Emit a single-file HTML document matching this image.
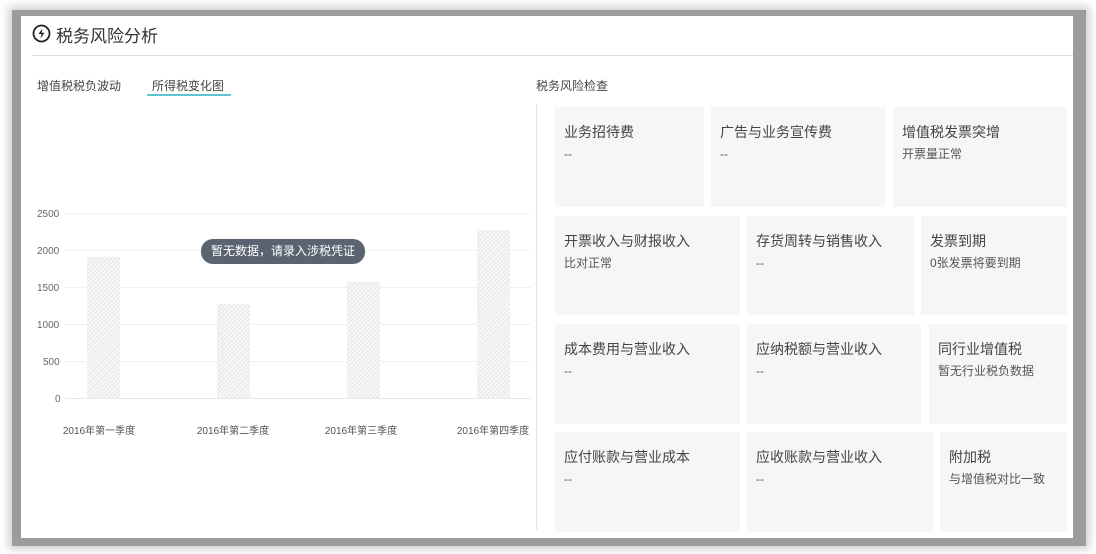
<!DOCTYPE html>
<html><head><meta charset="utf-8"><style>
*{margin:0;padding:0;box-sizing:border-box}
body{width:1096px;height:554px;background:#fff;position:relative;overflow:hidden;font-family:"Liberation Sans","Noto Sans CJK SC",sans-serif;color:#333}
.frame{position:absolute;left:12px;top:10px;width:1074px;height:536px;background:#9c9c9c;box-shadow:0 0 8px 4px #d4d4d4}
.panel{position:absolute;left:21px;top:16px;width:1052px;height:522px;background:#fff}
.a{position:absolute;white-space:nowrap}
.card{position:absolute;background:#f6f6f6;padding:16px 0 0 9px}
.card .t{font-size:14px;color:#444;line-height:18px}
.card .s{font-size:12px;color:#555;margin-top:6px;line-height:14px}
.yl{position:absolute;left:37px;font-size:10px;color:#666;width:24px}
.gl{position:absolute;left:65px;width:466px;height:1px;background:#f0f0f0}
.bar{position:absolute;width:33px;background:repeating-linear-gradient(135deg,#e4e4e4 0 1px,#f8f8f8 1px 3px)}
.xl{position:absolute;top:422px;font-size:10px;color:#555;width:100px;text-align:center}
</style></head><body>
<div class="frame"></div>
<div class="panel"></div>
<svg class="a" style="left:32px;top:24px" width="19" height="19" viewBox="0 0 19 19"><circle cx="9.5" cy="9.5" r="8" fill="none" stroke="#222" stroke-width="1.8"/><path d="M10.5 4.5 L6.5 10 H9.5 L8.5 14.5 L12.5 8.8 H9.6 Z" fill="#222"/></svg>
<div class="a" style="left:56px;top:22px;font-size:17px;color:#333">税务风险分析</div>
<div class="a" style="left:32px;top:55px;width:1041px;height:1px;background:#ddd"></div>
<div class="a" style="left:37px;top:77px;font-size:12px;color:#444">增值税税负波动</div>
<div class="a" style="left:152px;top:77px;font-size:12px;color:#444">所得税变化图</div>
<div class="a" style="left:147px;top:94px;width:84px;height:2px;background:#5ec3d4"></div>
<div class="a" style="left:536px;top:77px;font-size:12px;color:#444">税务风险检查</div>
<div class="a" style="left:536px;top:104px;width:1px;height:426px;background:#e2e2e2"></div>

<div class="yl" style="top:209px">2500</div><div class="gl" style="top:213px"></div>
<div class="yl" style="top:246px">2000</div><div class="gl" style="top:250px"></div>
<div class="yl" style="top:283px">1500</div><div class="gl" style="top:287px"></div>
<div class="yl" style="top:320px">1000</div><div class="gl" style="top:324px"></div>
<div class="yl" style="top:357px;left:43px">500</div><div class="gl" style="top:361px"></div>
<div class="yl" style="top:394px;left:55px">0</div><div class="gl" style="top:398px;background:#e8e8e8"></div>
<div class="bar" style="left:87px;top:257px;height:141px"></div>
<div class="bar" style="left:217px;top:304px;height:94px"></div>
<div class="bar" style="left:347px;top:282px;height:116px"></div>
<div class="bar" style="left:477px;top:230px;height:168px"></div>
<div class="xl" style="left:49px">2016年第一季度</div>
<div class="xl" style="left:183px">2016年第二季度</div>
<div class="xl" style="left:311px">2016年第三季度</div>
<div class="xl" style="left:443px">2016年第四季度</div>
<div class="a" style="left:201px;top:239px;width:164px;height:25px;border-radius:12px;background:#5a6471;color:#fff;font-size:12px;text-align:center;line-height:25px">暂无数据，请录入涉税凭证</div>

<div class="card" style="left:555px;top:107px;width:149px;height:100px"><div class="t">业务招待费</div><div class="s">--</div></div>
<div class="card" style="left:711px;top:107px;width:174px;height:100px"><div class="t">广告与业务宣传费</div><div class="s">--</div></div>
<div class="card" style="left:893px;top:107px;width:174px;height:100px"><div class="t">增值税发票突增</div><div class="s">开票量正常</div></div>
<div class="card" style="left:555px;top:216px;width:185px;height:99px"><div class="t">开票收入与财报收入</div><div class="s">比对正常</div></div>
<div class="card" style="left:747px;top:216px;width:167px;height:99px"><div class="t">存货周转与销售收入</div><div class="s">--</div></div>
<div class="card" style="left:921px;top:216px;width:146px;height:99px"><div class="t">发票到期</div><div class="s">0张发票将要到期</div></div>
<div class="card" style="left:555px;top:324px;width:185px;height:100px"><div class="t">成本费用与营业收入</div><div class="s">--</div></div>
<div class="card" style="left:747px;top:324px;width:174px;height:100px"><div class="t">应纳税额与营业收入</div><div class="s">--</div></div>
<div class="card" style="left:929px;top:324px;width:138px;height:100px"><div class="t">同行业增值税</div><div class="s">暂无行业税负数据</div></div>
<div class="card" style="left:555px;top:432px;width:185px;height:100px"><div class="t">应付账款与营业成本</div><div class="s">--</div></div>
<div class="card" style="left:747px;top:432px;width:186px;height:100px"><div class="t">应收账款与营业收入</div><div class="s">--</div></div>
<div class="card" style="left:940px;top:432px;width:127px;height:100px"><div class="t">附加税</div><div class="s">与增值税对比一致</div></div>
</body></html>
